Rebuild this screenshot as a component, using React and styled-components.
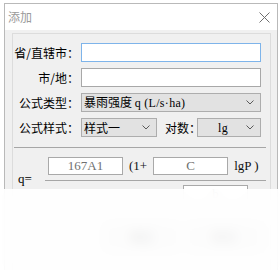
import React from "react";
import styled, { createGlobalStyle } from "styled-components";

const Global = createGlobalStyle`
  html, body { margin: 0; padding: 0; background: #ffffff; }
  body { font-family: "Noto Sans CJK SC", "Noto Sans", sans-serif; font-size: 12px; color: #000; }
  #root { width: 280px; height: 270px; overflow: hidden; }
`;

const Page = styled.div`
  position: relative;
  width: 280px;
  height: 270px;
  overflow: hidden;
  padding: 3px 0 0 4px;
  box-sizing: border-box;
`;

const Window = styled.div`
  width: 274px;
  height: 290px;
  box-sizing: border-box;
  border: 1px solid #b9b9b9;
  background: #f0f0f0;
  display: flex;
  flex-direction: column;
`;

const TitleBar = styled.div`
  height: 26px;
  background: #ffffff;
  display: flex;
  align-items: center;
  justify-content: space-between;
  padding: 0 7px 0 3px;
  flex: none;
`;

const Title = styled.span`
  font-size: 12px;
  color: #9a9a9a;
  line-height: 12px;
  margin-top: -1px;
`;

const Body = styled.div`
  padding: 3px 6px 0 7px;
  flex: 1;
  display: flex;
  flex-direction: column;
`;

const Panel = styled.div`
  border: 1px solid #dcdcdc;
  flex: 1;
  padding: 9px 0 0 0;
  display: flex;
  flex-direction: column;
`;

const FormGrid = styled.div`
  display: grid;
  grid-template-columns: 68px 180px;
  grid-auto-rows: 19px;
  row-gap: 6px;
`;

const Label = styled.label`
  text-align: right;
  padding-right: 2px;
  line-height: 19px;
  font-size: 12px;
  white-space: nowrap;
`;

const TextInput = styled.div`
  box-sizing: border-box;
  height: 19px;
  background: #fff;
  border: 1px solid ${(p) => (p.$focus ? "#7eb4ea" : "#a8a8a8")};
`;

const SelectBox = styled.div`
  box-sizing: border-box;
  height: 19px;
  width: ${(p) => (p.$w ? `${p.$w}px` : "100%")};
  background: #e2e2e2;
  border: 1px solid #adadad;
  display: flex;
  align-items: center;
  padding: 0 6px 0 2px;
  flex: none;
`;

const SelectText = styled.span`
  flex: 1;
  font-size: 12px;
  white-space: nowrap;
  text-align: ${(p) => (p.$center ? "center" : "left")};
  line-height: 17px;
`;

const Serif = styled.span`
  font-family: "Liberation Serif", "DejaVu Serif", serif;
  font-size: 12px;
  letter-spacing: 0.3px;
`;

const StyleRow = styled.div`
  display: flex;
  align-items: center;
`;

const InlineLabel = styled.span`
  width: 32px;
  margin-left: 8px;
  font-size: 12px;
  white-space: nowrap;
  flex: none;
  overflow: visible;
`;

const Separator = styled.div`
  height: 1px;
  background: #a6a6a6;
  margin: 10px 4px 0 1px;
  flex: none;
`;

const Formula = styled.div`
  display: flex;
  align-items: center;
  margin-top: 9px;
  padding-left: 5px;
`;

const QLabel = styled.div`
  width: 27px;
  flex: none;
  font-family: "Liberation Serif", "DejaVu Serif", serif;
  font-size: 13px;
  line-height: 13px;
  margin-top: -3px;
`;

const Fraction = styled.div`
  width: 221px;
  display: flex;
  flex-direction: column;
`;

const TermRow = styled.div`
  display: flex;
  align-items: center;
  height: 18px;
  padding-left: ${(p) => p.$indent || 0}px;
`;

const ValueBox = styled.div`
  box-sizing: border-box;
  width: ${(p) => p.$w}px;
  height: 18px;
  border: 1px solid #a9a9a9;
  background: #fff;
  color: #707070;
  font-family: "Liberation Serif", "DejaVu Serif", serif;
  font-size: 13px;
  line-height: 16px;
  text-align: center;
  flex: none;
`;

const Op = styled.span`
  font-family: "Liberation Serif", "DejaVu Serif", serif;
  font-size: 13px;
  margin: 0 6px;
  white-space: nowrap;
  color: #111;
`;

const FractionLine = styled.div`
  height: 1px;
  background: #a6a6a6;
  margin: 5px 0 4px 0;
`;

const ButtonRow = styled.div`
  display: flex;
  justify-content: flex-end;
  gap: 10px;
  margin: 22px 10px 0 0;
`;

const Button = styled.div`
  width: 70px;
  height: 22px;
  border: 1px solid #adadad;
  background: #e1e1e1;
  text-align: center;
  line-height: 22px;
`;

const Fade = styled.div`
  position: absolute;
  left: 0;
  right: 0;
  top: 189px;
  bottom: 0;
  background: rgba(255, 255, 255, 0.9);
  backdrop-filter: blur(6px);
`;

const Chevron = () => (
  <svg width="8" height="5" viewBox="0 0 8 5" style={{ flex: "none" }}>
    <polyline points="0.5,0.5 4,4 7.5,0.5" fill="none" stroke="#5a5a5a" strokeWidth="1" />
  </svg>
);

const CloseIcon = () => (
  <svg width="11" height="11" viewBox="0 0 11 11">
    <path d="M0.5 0.5 L10.5 10.5 M10.5 0.5 L0.5 10.5" stroke="#6f6f6f" strokeWidth="1" fill="none" />
  </svg>
);

export default function App() {
  return (
    <>
      <Global />
      <Page>
        <Window>
          <TitleBar>
            <Title>添加</Title>
            <CloseIcon />
          </TitleBar>
          <Body>
            <Panel>
              <FormGrid>
                <Label>省/直辖市：</Label>
                <TextInput $focus />
                <Label>市/地：</Label>
                <TextInput />
                <Label>公式类型：</Label>
                <SelectBox>
                  <SelectText>
                    暴雨强度 <Serif>q (L/s·ha)</Serif>
                  </SelectText>
                  <Chevron />
                </SelectBox>
                <Label>公式样式：</Label>
                <StyleRow>
                  <SelectBox $w={76}>
                    <SelectText>样式一</SelectText>
                    <Chevron />
                  </SelectBox>
                  <InlineLabel>对数：</InlineLabel>
                  <SelectBox $w={64}>
                    <SelectText $center>
                      <Serif>lg</Serif>
                    </SelectText>
                    <Chevron />
                  </SelectBox>
                </StyleRow>
              </FormGrid>
              <Separator />
              <Formula>
                <QLabel>q=</QLabel>
                <Fraction>
                  <TermRow $indent={3}>
                    <ValueBox $w={75}>167A1</ValueBox>
                    <Op>(1+</Op>
                    <ValueBox $w={75}>C</ValueBox>
                    <Op>lgP )</Op>
                  </TermRow>
                  <FractionLine />
                  <TermRow $indent={138}>
                    <ValueBox $w={65}>b</ValueBox>
                  </TermRow>
                </Fraction>
              </Formula>
              <ButtonRow>
                <Button>确定</Button>
                <Button>取消</Button>
              </ButtonRow>
            </Panel>
          </Body>
        </Window>
        <Fade />
      </Page>
    </>
  );
}
